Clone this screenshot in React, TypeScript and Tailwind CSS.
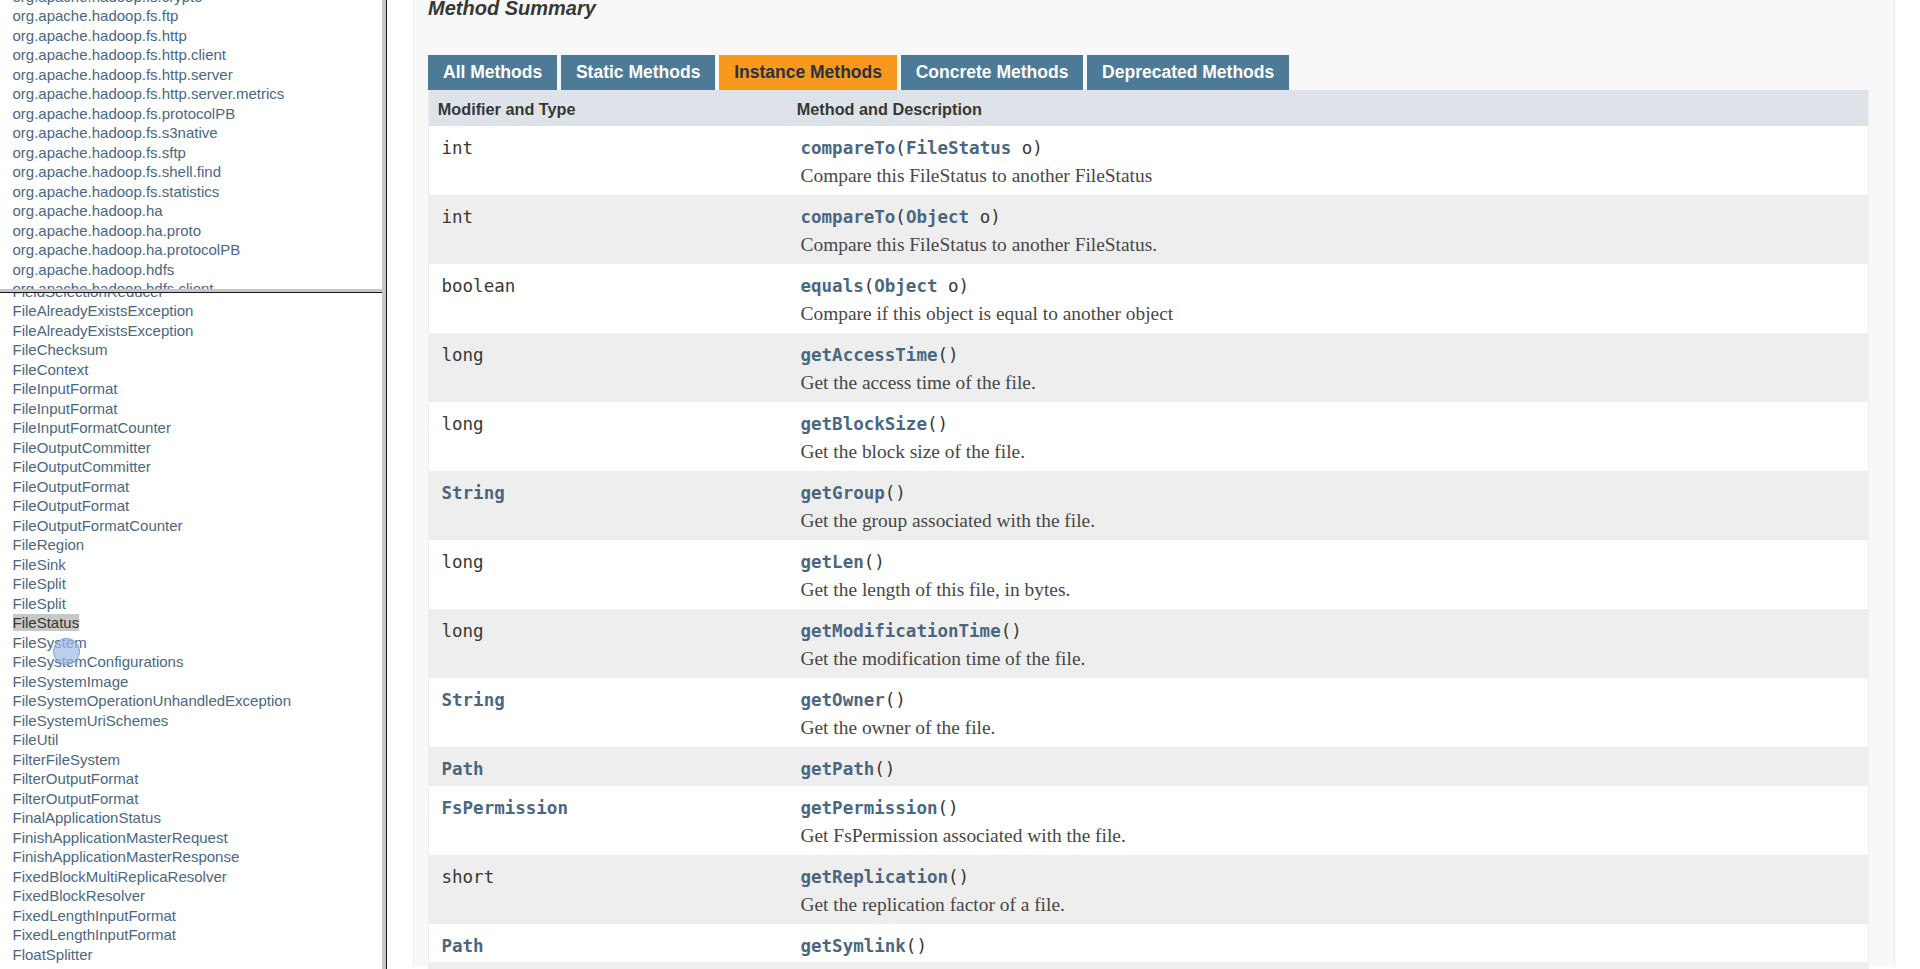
import React from "react";

const topPkgs = [
  "org.apache.hadoop.fs.crypto",
  "org.apache.hadoop.fs.ftp",
  "org.apache.hadoop.fs.http",
  "org.apache.hadoop.fs.http.client",
  "org.apache.hadoop.fs.http.server",
  "org.apache.hadoop.fs.http.server.metrics",
  "org.apache.hadoop.fs.protocolPB",
  "org.apache.hadoop.fs.s3native",
  "org.apache.hadoop.fs.sftp",
  "org.apache.hadoop.fs.shell.find",
  "org.apache.hadoop.fs.statistics",
  "org.apache.hadoop.ha",
  "org.apache.hadoop.ha.proto",
  "org.apache.hadoop.ha.protocolPB",
  "org.apache.hadoop.hdfs",
  "org.apache.hadoop.hdfs.client",
  "org.apache.hadoop.hdfs.client.impl",
];

const classNames = [
  "FieldSelectionReducer",
  "FileAlreadyExistsException",
  "FileAlreadyExistsException",
  "FileChecksum",
  "FileContext",
  "FileInputFormat",
  "FileInputFormat",
  "FileInputFormatCounter",
  "FileOutputCommitter",
  "FileOutputCommitter",
  "FileOutputFormat",
  "FileOutputFormat",
  "FileOutputFormatCounter",
  "FileRegion",
  "FileSink",
  "FileSplit",
  "FileSplit",
  "FileStatus",
  "FileSystem",
  "FileSystemConfigurations",
  "FileSystemImage",
  "FileSystemOperationUnhandledException",
  "FileSystemUriSchemes",
  "FileUtil",
  "FilterFileSystem",
  "FilterOutputFormat",
  "FilterOutputFormat",
  "FinalApplicationStatus",
  "FinishApplicationMasterRequest",
  "FinishApplicationMasterResponse",
  "FixedBlockMultiReplicaResolver",
  "FixedBlockResolver",
  "FixedLengthInputFormat",
  "FixedLengthInputFormat",
  "FloatSplitter",
];

type Row = {
  type: string;
  typeLink?: boolean;
  name: string;
  paramType?: string;
  paramName?: string;
  desc?: string;
};

const rows: Row[] = [
  { type: "int", name: "compareTo", paramType: "FileStatus", paramName: "o", desc: "Compare this FileStatus to another FileStatus" },
  { type: "int", name: "compareTo", paramType: "Object", paramName: "o", desc: "Compare this FileStatus to another FileStatus." },
  { type: "boolean", name: "equals", paramType: "Object", paramName: "o", desc: "Compare if this object is equal to another object" },
  { type: "long", name: "getAccessTime", desc: "Get the access time of the file." },
  { type: "long", name: "getBlockSize", desc: "Get the block size of the file." },
  { type: "String", typeLink: true, name: "getGroup", desc: "Get the group associated with the file." },
  { type: "long", name: "getLen", desc: "Get the length of this file, in bytes." },
  { type: "long", name: "getModificationTime", desc: "Get the modification time of the file." },
  { type: "String", typeLink: true, name: "getOwner", desc: "Get the owner of the file." },
  { type: "Path", typeLink: true, name: "getPath" },
  { type: "FsPermission", typeLink: true, name: "getPermission", desc: "Get FsPermission associated with the file." },
  { type: "short", name: "getReplication", desc: "Get the replication factor of a file." },
  { type: "Path", typeLink: true, name: "getSymlink" },
  { type: "int", name: "hashCode", desc: "Returns a hash code value for the object, which is defined as the hash code of the path name." },
];

const tabs = [
  { label: "All Methods", active: false },
  { label: "Static Methods", active: false },
  { label: "Instance Methods", active: true },
  { label: "Concrete Methods", active: false },
  { label: "Deprecated Methods", active: false },
];

function IndexItem({ text, highlight }: { text: string; highlight?: boolean }) {
  return (
    <li className="pb-[2.5px] leading-[17px] whitespace-nowrap">
      <span className={highlight ? "bg-[#c8c8c8] text-[#353833]" : "text-[#4a6782]"}>{text}</span>
    </li>
  );
}

export default function App() {
  return (
    <div className="relative flex h-[969px] w-[1920px] overflow-hidden bg-white font-['Liberation_Sans',Arial,sans-serif] text-[#353833]">
      {/* Left frames */}
      <div className="flex w-[382px] shrink-0 flex-col">
        <div className="h-[289px] shrink-0 overflow-hidden">
          <ul className="mx-[12.5px] mt-[-12.5px] text-[15px]">
            {topPkgs.map((p, i) => (
              <IndexItem key={i} text={p} />
            ))}
          </ul>
        </div>
        <div className="h-[3px] shrink-0 bg-[#c6c6c6]" />
        <div className="h-px shrink-0 bg-[#1a1a1a]" />
        <div className="flex-1 overflow-hidden">
          <ul className="mx-[12.5px] mt-[-10.5px] text-[15px]">
            {classNames.map((c, i) => (
              <IndexItem key={i} text={c} highlight={i === 17} />
            ))}
          </ul>
        </div>
      </div>
      <div className="w-[4px] shrink-0 bg-[#c6c6c6]" />
      <div className="w-px shrink-0 bg-[#1a1a1a]" />

      {/* Right frame */}
      <div className="flex-1 overflow-hidden pl-[26px] pr-[25px]">
        <div className="h-full border-x border-[#ededed] bg-[#f8f8f8] pl-[14px] pr-[25px]">
          <h3 className="mt-[-3px] h-[23px] text-[20px] font-bold italic leading-[23px]">Method Summary</h3>
          <div className="mt-[35px] flex h-[35px]">
            {tabs.map((t) => (
              <div
                key={t.label}
                className={
                  t.active
                    ? "mr-[3.75px] flex items-center bg-[#f8981d] px-[15px] text-[17.5px] font-bold text-[#253441]"
                    : "mr-[3.75px] flex items-center bg-[#4d7a97] px-[15px] text-[17.5px] font-bold text-white"
                }
              >
                {t.label}
              </div>
            ))}
          </div>
          <div className="border-x border-[#eeeeee]">
            <div className="grid h-[36px] grid-cols-[359px_1fr] bg-[#dee3e9] text-[16.25px] font-bold">
              <div className="pl-[8.75px] pt-[8px] leading-[22px]">Modifier and Type</div>
              <div className="pl-[8.75px] pt-[8px] leading-[22px]">Method and Description</div>
            </div>
            {rows.map((r, i) => (
              <div
                key={i}
                className={
                  "grid grid-cols-[359px_1fr] " +
                  (i % 2 === 0 ? "bg-white " : "bg-[#eeeeee] ") +
                  (r.desc ? "h-[69px]" : "h-[38.5px]")
                }
              >
                <div className="pl-[12.5px] pt-[10px]">
                  <code
                    className={
                      "font-['DejaVu_Sans_Mono',monospace] text-[17.5px] leading-[24px] " +
                      (r.typeLink ? "font-bold text-[#4a6782]" : "text-[#353833]")
                    }
                  >
                    {r.type}
                  </code>
                </div>
                <div className="pl-[12.5px] pt-[10px]">
                  <div className="whitespace-nowrap font-['DejaVu_Sans_Mono',monospace] text-[17.5px] leading-[24px] text-[#353833]">
                    <span className="font-bold text-[#4a6782]">{r.name}</span>(
                    {r.paramType && (
                      <>
                        <span className="font-bold text-[#4a6782]">{r.paramType}</span>
                        {"\u00a0" + r.paramName}
                      </>
                    )}
                    )
                  </div>
                  {r.desc && (
                    <div className="mt-[3px] font-['Liberation_Serif',serif] text-[19.4px] leading-[25px] text-[#474747]">
                      {r.desc}
                    </div>
                  )}
                </div>
              </div>
            ))}
          </div>
        </div>
      </div>

      {/* click indicator */}
      <div className="absolute left-[53px] top-[638px] h-[27px] w-[27px] rounded-full border border-[#7f9cc8] bg-[#9ebbea]/70" />
    </div>
  );
}
